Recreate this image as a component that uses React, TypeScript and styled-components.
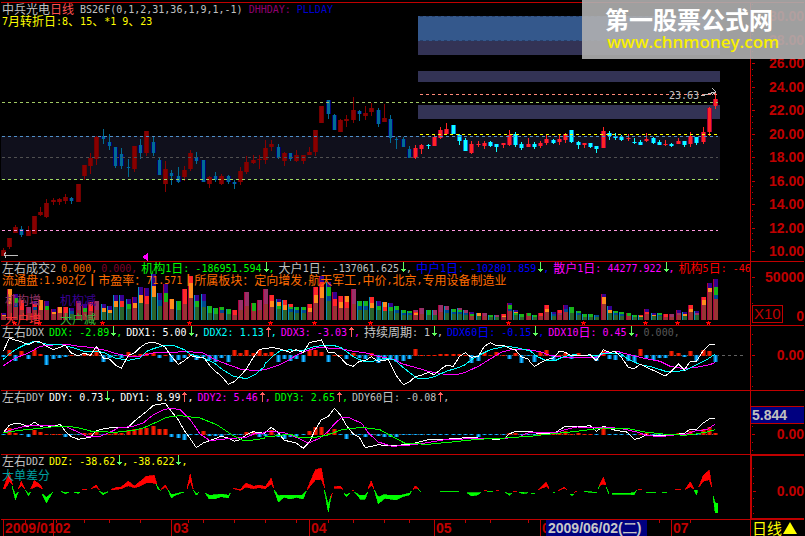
import React from 'react';
import styled, { createGlobalStyle } from 'styled-components';

const RED = '#c00000';

const GlobalStyle = createGlobalStyle`
  body {
    margin: 0;
    background: #000;
    color: #c0c0c0;
    font-family: 'DejaVu Sans Mono', 'Noto Sans CJK SC', monospace;
    font-size: 10px;
    line-height: 12px;
  }
`;

const Screen = styled.main`
  position: relative;
  padding: 2px 1px 0;
  overflow-x: clip;
  background: #000;
`;

const Panel = styled.section`
  display: grid;
  grid-template-columns: minmax(0, 1fr) 54px;
  border-top: 1px solid ${RED};
`;

const Plot = styled.div`
  position: relative;
  overflow-x: clip;
`;

const Chart = styled.svg`
  display: block;
  width: 100%;
  height: auto;
`;

const Overlay = styled.header`
  position: absolute;
  inset: 0 0 auto 0;
`;

const Line = styled.div<{ $color?: string }>`
  display: flex;
  height: 12px;
  padding-left: 1px;
  white-space: pre;
  color: ${(p) => p.$color ?? '#c0c0c0'};
`;

const Tint = styled.span<{ $color: string }>`
  display: inline-flex;
  flex: none;
  color: ${(p) => p.$color};
`;

const Name = styled(Tint)`
  margin-right: 5px;
`;

const Latin = styled.span`
  font: 10px/13px 'DejaVu Sans Mono', monospace;
`;

const Han = styled.span`
  font: 12px/12px 'Noto Sans CJK SC', sans-serif;
`;

const Comma = styled.span`
  width: 10px;
  line-height: 13px;
`;

const Legend = styled.div<{ $top: number; $left?: number }>`
  position: absolute;
  left: ${(p) => p.$left ?? 4}px;
  top: ${(p) => p.$top}px;
  display: flex;
  gap: 19px;
`;

const Axis = styled.div<{ $active?: boolean }>`
  position: relative;
  display: flex;
  flex-direction: column;
  align-items: flex-end;
  border-left: ${(p) => (p.$active ? 2 : 1)}px solid ${RED};
  box-shadow: ${(p) => (p.$active ? `inset 0 1px ${RED}, inset 0 -1px ${RED}` : 'none')};
  color: ${RED};
  font: bold 14px/14px 'Liberation Sans', sans-serif;
`;

const PriceScale = styled.div`
  display: flex;
  flex-direction: column;
  justify-content: space-between;
  height: 249px;
  padding-top: 6px;
`;

const Level = styled.span<{ $top: number }>`
  margin-top: ${(p) => p.$top}px;
`;

const VolumeFoot = styled.div`
  display: flex;
  align-items: flex-end;
  justify-content: space-between;
  align-self: stretch;
  margin-top: 21px;
`;

const Multiplier = styled.span`
  margin-left: 1px;
  padding: 0 1px;
  border: 1px solid ${RED};
  font: 15px/16px 'Liberation Sans', sans-serif;
`;

const CursorValue = styled.output`
  align-self: stretch;
  margin-top: 15px;
  padding-left: 1px;
  border: solid ${RED};
  border-width: 1px 0;
  background: #000080;
  color: #c0c0c0;
  line-height: 16px;
`;

const Ticks = styled.svg`
  position: absolute;
  left: 0;
  top: 0;
  width: 6px;
  height: 100%;
`;

const Months = styled.div`
  position: relative;
  display: grid;
  grid-template-columns: 2fr 50fr 118fr 138fr 125fr 106fr 131fr 79fr;
  height: 16px;
  color: ${RED};
  font: bold 14px/16px 'Liberation Sans', sans-serif;
`;

const Month = styled.div`
  position: relative;
  min-width: 0;
  padding-left: 1px;
  border-left: 1px solid ${RED};
  white-space: nowrap;
`;

const MonthTicks = styled(Chart)`
  position: absolute;
  left: 0;
  top: 0;
`;

const SelectedDate = styled.time`
  position: absolute;
  left: 5px;
  top: 0;
  padding: 0 6px 0 2px;
  background: #000080;
  color: #c8c8c8;
`;

const PeriodButton = styled.button`
  display: flex;
  align-items: center;
  gap: 1px;
  height: 16px;
  padding: 0 1px;
  border: 0;
  border-left: 1px solid ${RED};
  background: none;
  color: #ff0;
  font: 15px/16px 'Noto Sans CJK SC', sans-serif;
  white-space: nowrap;
`;

const Watermark = styled.a`
  position: absolute;
  right: 0;
  top: 0;
  width: 200px;
  height: 53px;
  padding: 6px 0 0 23px;
  background: rgba(176, 176, 176, 0.9);
  color: #fff;
  text-decoration: none;
  font: bold 24px/26px 'Noto Sans CJK SC', sans-serif;
`;

const Address = styled.div`
  padding-left: 2px;
  color: #f8f000;
  font: 600 17px/20px 'Open Sans', sans-serif;
`;

/* ---------- text ---------- */

function Mixed({ children }: { children: string }) {
  const runs = children.match(/[\u2500-\u257f\u3000-\u9fff\uff00-\uffef]+|[^\u2500-\u257f\u3000-\u9fff\uff00-\uffef]+/g) ?? [];
  return (
    <>
      {runs.map((run, i) => (run.charCodeAt(0) > 0x24ff ? <Han key={i}>{run}</Han> : <Latin key={i}>{run}</Latin>))}
    </>
  );
}

function Arrow({ up }: { up: boolean }) {
  return (
    <svg width="7" height="12" viewBox="0 0 7 12" shapeRendering="crispEdges" fill={up ? '#ff6060' : '#60ff60'}>
      <rect x="4" y={up ? 1 : 0} width="1" height="10" />
      {up ? <path d="M3 2h3v1h-3zM2 3h5v1h-5z" /> : <path d="M3 8h3v1h-3zM2 7h5v1h-5z" />}
    </svg>
  );
}

type FieldData = [text: string, color: string, trend?: 'up' | 'down'];

function Fields({ name, items }: { name: string; items: FieldData[] }) {
  return (
    <Line>
      <Name $color="#c0c0c0">
        <Mixed>{name}</Mixed>
      </Name>
      {items.map(([text, color, trend]) => (
        <Tint key={text + color} $color={color}>
          <Mixed>{text}</Mixed>
          {trend && <Arrow up={trend === 'up'} />}
          <Comma>,</Comma>
        </Tint>
      ))}
    </Line>
  );
}

/* ---------- data ---------- */

const dayX = (i: number) => 3 + 25 * Math.floor(i / 4) + 6 * (i % 4);

// direction, high, body top, body bottom, low
const CANDLES = `u248 250 256 256,u238 238 247 249,u225 227 233 233,d226 229 235 237,u226 230 236 236,u216 216 234 234,
u207 212 215 216,u199 203 217 218,u198 200 202 205,u198 199 202 205,u194 197 201 204,d197 198 201 204,u184 184 202 202,
u165 165 176 180,u153 158 166 174,u136 137 159 165,d129 136 139 144,d134 142 146 150,d147 147 166 168,d148 154 166 169,
d159 167 168 177,u146 146 169 172,d139 145 153 159,u131 131 153 156,d136 142 153 156,d158 160 175 175,u161 169 184 192,
d170 173 176 185,d167 176 182 183,u166 170 177 181,u150 153 169 171,d152 157 161 164,d160 160 182 182,u176 177 184 188,
d172 176 180 182,u174 176 184 185,d175 176 182 184,d180 182 184 189,u167 171 182 185,u156 162 172 174,u155 160 163 164,
u155 159 160 169,u140 148 160 164,u140 144 147 151,d144 147 158 159,u152 153 161 166,d153 153 159 161,u150 155 161 162,
u155 155 161 164,u147 152 155 155,u130 130 152 156,u106 106 123 123,d100 100 114 119,d114 115 130 130,u119 120 132 132,
u115 119 121 127,u97 110 120 123,d110 111 114 121,u106 113 116 120,u103 108 112 116,d108 110 124 127,u104 118 122 122,
d115 119 138 143,d137 139 140 149,d137 139 147 147,d146 149 158 158,u145 148 158 159,u144 145 149 154,d144 145 146 149,
u135 137 146 146,u127 130 138 139,u123 129 134 134,d125 125 134 134,d134 135 141 145,d138 140 151 151,u141 144 153 154,
u141 144 145 147,u141 143 146 149,d141 142 146 147,d144 144 147 152,u143 143 145 148,u130 135 145 146,d132 134 145 147,
d142 144 148 150,u138 144 147 147,d142 144 147 149,u141 143 146 148,u134 139 143 145,d139 140 143 144,u134 139 142 145,
u133 134 140 143,d130 130 142 143,d141 142 145 149,u143 143 145 148,d143 143 147 148,d146 146 149 153,u127 131 148 148,
d131 133 136 140,d133 136 138 140,d135 137 140 141,u134 138 139 141,d138 142 143 144,d140 142 145 145,u133 139 141 142,
d137 138 143 144,d140 142 145 145,u140 144 145 146,d143 144 146 147,u138 141 144 144,d141 141 145 147,u132 136 144 147,
d137 137 143 145,u127 132 142 144,u107 108 132 136,u91 99 106 109`
  .split(',')
  .map((s) => {
    const t = s.trim();
    const [high, top, bottom, low] = t.slice(1).split(' ').map(Number);
    return { up: t[0] === 'u', high, top, bottom, low };
  });

// height and stacked colours from the top of the bar to its base
const VOLUMES = `7po 31oB 26pgb 20rB 13mB 19prb 20oB 19pg 11po 13oB 13rB 12pb 19mB 16pg 18rB 19mB 16po 14po 25po 25pr 21pg 23po
33po 32pr 46po 27pb 36pg 21oB 19gG 31rB 44roo 25pg 26pb 14gG 12gG 13gb 11gG 10rB 20mB 28mB 17gB 20mB 31mB 25roB 21pog 20roG 16rgb
13gbG 13gbG 16roB 33roB 44prooB 38pggb 28prB 24roB 24orB 31mmB 19gbG 19gbG 23roG 19pgG 18orG 17pgG 14gbG 10gbG 9gbG 10mro 12mmB
10gG 10mG 15mB 14mbG 11gbG 12mgb 10mbG 8pgB 7oG 7mB 5gG 5mG 6roB 17pggb 10pog 6gG 7gB 5gG 7rB 15roB 8pbG 10rmB 15pbB 13ggG
9gbG 6gG 6gG 5bG 26pooBB 14poG 9gbG 8gbG 7gB 5gG 5ro 11prB 7poG 7gbG 6rB 6mB 10pmB 8poG 15roB 9pmG 23rooBB 37poBBB 41ppggb`
  .split(/\s+/)
  .map((s) => ({ height: parseInt(s, 10), bands: s.replace(/\d+/, '').split('') }));

const BAND_COLORS: Record<string, string> = {
  p: '#360090',
  o: '#ff8c1c',
  g: '#18b418',
  r: '#ff2828',
  m: '#983068',
  b: '#004890',
  B: '#983434',
  G: '#2c642c',
};

const DDX_BARS = [
  -5, 19, -17, 16, -11, 19, 7, -29, -11, -8, -5, 3, -2, 10, 7, 17, -20, -10, -4, -8, 13, 1, 7, 10, 8, -8, 2, -20, -14, -8,
  7, -14, -5, -14, -20, -8, -20, 19, 10, 19, 10, 17, 10, 13, -20, -11, -17, -11, -20, 19, 19, 13, -20, 4, 4, -11, 10, -8,
  -11, 10, -23, -14, -14, -20, -17, -11, 22, 4, 4, 4, 7, 7, 7, 7, 4, -23, -17, 13, 1, 13, 4, -11, 8, -23, -3, -20, 13, 19,
  -14, 4, 10, -11, 10, 4, -2, -17, 16, -11, -14, -5, -17, -20, 22, -8, -14, -8, -8, 16, 10, -5, 16, -17, 19, 16, -20,
];

const DDY_BARS = [
  -2, 22, 7, -2, -8, 15, 9, 3, 3, 3, -8, -3, -4, 6, 5, 13, -2, 4, 6, 7, 14, 17, 19, 20, 28, 17, 19, -8, -11, -17, -3, -2,
  13, -6, -7, -5, -4, -2, -4, 10, 10, -8, -6, 16, -10, -14, -10, -7, -3, 13, 25, 25, 7, 19, -4, -16, -3, -3, -10, -4, -7,
  -8, -8, -8, -3, -3, -3, -3, -3, -3, -3, -3, -3, -3, -3, -4, -8, -2, -2, -2, -2, 6, 6, -2, -2, -4, 7, 4, 4, 6, 13, 3, 6,
  4, 4, -4, 22, -4, -4, -3, -4, -4, 2, 7, -4, -4, -4, -4, 6, 4, 13, -4, 18, 24, 6,
];

/* Traces are recorded at three steps per pixel, in sections with their own origin. */
const place = (ox: number, oy: number, pts: string) =>
  pts
    .split(' ')
    .map((p) => {
      const [x, y] = p.split(',').map(Number);
      return `${(ox + x / 3).toFixed(1)},${(oy + y / 3).toFixed(1)}`;
    })
    .join(' ');

const trace = (oy: number, a: string, b: string, c: string) =>
  [place(0, oy, a), place(265, oy, b), place(530, oy, c)].join(' ');

const DDX_LINES: [string, string][] = [
  ['#ff00ff', trace(258,
    '10,323 46,300 85,285 121,265 150,262 196,258 235,265 270,268 310,275 346,286 385,295 421,295 460,285 500,283 571,281 610,285 646,305 685,320 721,333 765,338 794,335',
    '0,335 40,322 70,307 94,292 125,278 160,268 190,270 230,273 265,280 301,284 340,295 390,305 410,317 450,328 490,340 540,349 575,350 601,343 640,325 676,303 710,282 740,275 770,273 794,275',
    '0,276 30,281 60,292 100,298 140,298 200,298 230,283 265,281 300,290 340,300 390,310 420,325 463,332 500,328 540,320 556,313')],
  ['#00ffff', trace(258,
    '10,304 28,288 46,275 75,260 103,250 139,258 175,258 214,268 253,280 289,280 310,283 346,300 385,307 421,300 440,280 460,272 496,261 525,264 553,275 571,288 610,300 646,317 664,332 700,355 739,362 765,350 794,325',
    '0,317 25,293 45,279 75,275 94,279 115,277 150,265 200,261 226,268 244,280 265,296 295,310 325,310 340,305 370,300 390,307 410,325 433,343 455,360 480,363 508,356 544,340 583,328 601,320 619,305 645,290 676,275 720,265 751,268 780,275',
    '0,278 20,295 49,308 75,308 100,296 130,290 163,293 200,294 220,286 256,287 274,288 295,304 331,320 370,328 406,340 440,340 463,338 500,320 530,305 556,288')],
  ['#ffffff', trace(258,
    '10,280 28,241 46,246 64,251 85,260 103,251 121,252 139,264 160,275 196,262 214,285 235,294 253,285 271,293 289,265 310,300 328,303 346,321 364,331 385,292 403,285 421,268 439,256 460,253 478,258 496,268 514,295 535,319 553,308 571,293 589,297 610,297 628,321 646,340 664,354 685,379 703,371 721,354 739,333 760,298 778,275 794,271',
    '0,273 20,268 45,273 75,283 94,275 115,284 133,254 169,246 190,283 208,284 226,298 244,318 265,325 283,310 301,308 319,296 340,310 370,305 394,353 415,380 433,372 451,356 469,352 490,343 508,350 526,335 544,322 565,325 583,296 601,284 619,298 640,295 658,265 676,254 694,263 715,262 733,271 751,275 769,296 790,303',
    '0,312 13,325 49,305 70,300 88,280 106,283 124,294 163,293 181,290 199,308 220,275 238,283 256,281 274,298 295,328 313,332 331,318 349,328 370,337 388,345 406,354 424,340 445,318 463,336 481,310 499,310 520,278 538,260 556,260')],
];

const DDY_LINES: [string, string][] = [
  ['#ffffff', trace(388,
    '10,134 28,112 46,106 64,108 85,116 103,102 121,115 139,113 160,116 180,109 196,130 214,146 235,154 253,151 271,148 289,128 310,123 340,118 385,118 403,100 421,85 439,71 460,52 496,46 514,70 535,95 553,128 571,152 589,179 610,165 628,158 664,145 685,150 703,160 721,155 739,140 760,131 792,136',
    '0,134 19,118 40,134 58,157 94,165 115,181 133,163 151,125 169,95 190,85 208,61 226,80 244,112 265,138 283,148 301,179 340,170 375,174 433,169 460,163 490,155 540,154 620,148 660,152 700,154 720,150 733,138 751,130 790,130',
    '0,130 30,138 75,134 106,115 145,117 181,113 199,130 220,115 256,127 290,132 313,154 331,150 349,141 420,142 463,136 481,123 499,126 520,105 538,93 556,90')],
  ['#ff00ff', trace(388,
    '10,134 46,122 85,112 130,113 196,115 225,128 260,145 300,145 330,133 355,120 400,115 430,105 460,80 490,65 514,61 540,65 571,95 600,138 630,158 685,152 740,148 765,136 790,136',
    '0,132 30,131 60,135 94,148 130,166 165,150 190,130 208,108 230,88 250,88 290,106 310,135 340,162 380,175 430,172 480,165 540,155 620,152 700,152 760,148 780,138 792,134',
    '0,134 75,135 106,125 140,117 200,118 220,118 270,121 320,132 349,142 390,146 440,140 463,140 499,128 530,125 556,108')],
  ['#00ff00', trace(388,
    '10,134 60,127 121,121 180,114 230,118 275,130 346,133 400,127 430,120 470,102 500,88 540,83 600,90 650,110 700,143 730,158 770,155 794,150',
    '0,147 40,143 75,138 100,148 150,148 185,142 230,125 290,118 345,125 390,150 420,166 490,169 560,162 640,154 720,150 792,145',
    '0,145 60,138 140,130 220,120 300,123 345,132 400,138 463,142 499,138 530,132 556,125')],
];

const DDZ_SHAPES: [number, string, string][] = [
  [0, 'r', '10,302 28,252 37,290 28,280 16,302'],
  [0, 'g', '36,295 46,335 55,312 46,320'],
  [0, 'r', '55,303 64,280 75,303 64,293'],
  [0, 'g', '76,305 85,323 92,312 85,318'],
  [0, 'r', '92,302 103,278 121,290 127,303 112,294 98,300'],
  [0, 'g', '127,318 139,345 158,313 139,328'],
  [0, 'g', '184,311 196,314 208,312 196,317'],
  [0, 'g', '222,313 235,316 241,312'],
  [0, 'r', '246,306 262,303 260,305'],
  [0, 'r', '272,303 289,290 298,306 289,297'],
  [0, 'g', '298,310 310,320 325,311 310,316'],
  [0, 'r', '333,305 350,297 364,297 385,279 403,294 421,280 439,265 463,262 470,288 460,285 439,284 421,294 403,299 385,293 364,302 340,305'],
  [0, 'g', '468,288 481,308 474,302'],
  [0, 'r', '484,304 496,290 504,306 496,297'],
  [0, 'g', '504,305 514,320 553,312 530,320 514,329'],
  [0, 'r', '561,302 571,258 580,304 571,280'],
  [0, 'g', '580,306 589,322 598,312 589,317'],
  [0, 'g', '616,315 628,322 650,320 664,318 685,322 692,314 685,330 664,326 646,332 628,333'],
  [0, 'r', '700,302 721,304 739,285 760,295 778,291 796,296 814,270 821,300 814,288 796,302 778,299 760,302 739,297 721,307'],
  [265, 'g', '27,305 40,323 60,321 94,321 112,321 124,308 115,333 94,328 75,333 58,328 40,342'],
  [265, 'r', '126,306 133,288 151,246 169,240 179,300 169,274 151,276 133,298'],
  [265, 'g', '178,305 190,350 199,320 190,372'],
  [265, 'r', '197,330 202,315 199,328'],
  [265, 'r', '207,297 226,294 234,304 226,301 207,300'],
  [265, 'g', '236,315 244,320 255,316 244,326'],
  [265, 'r', '260,306 268,307'],
  [265, 'g', '269,313 283,321 301,321 308,312 301,333 286,333'],
  [265, 'r', '308,304 319,278 327,302 319,292'],
  [265, 'g', '328,306 340,327 358,320 376,322 394,321 412,321 433,316 440,308 433,321 412,326 394,336 360,331 340,347'],
  [265, 'r', '444,304 451,293 460,302 451,300'],
  [265, 'g', '458,303 467,310'],
  [265, 'g', '525,310 582,310'],
  [265, 'g', '605,314 648,314 636,321 620,324'],
  [265, 'r', '656,306 666,307'],
  [265, 'g', '666,310 684,311'],
  [265, 'r', '694,307 702,308'],
  [265, 'g', '720,312 733,322 742,315 733,318'],
  [265, 'r', '745,310 757,310'],
  [265, 'g', '762,313 775,317 790,314'],
  [265, 'g', '797,316 809,316'],
  [530, 'r', '24,306 49,282 57,302 49,295'],
  [530, 'g', '70,313 75,314'],
  [530, 'r', '84,308 103,297 112,306 103,301'],
  [530, 'g', '120,318 131,318 125,323'],
  [530, 'r', '131,314 141,310'],
  [530, 'g', '162,310 181,311 200,314 181,313'],
  [530, 'g', '204,302 212,288 206,300'],
  [530, 'r', '208,294 220,268 229,292 220,288'],
  [530, 'g', '229,298 237,317 232,306'],
  [530, 'g', '246,316 295,316 313,314 320,306 313,320 290,319 246,318'],
  [530, 'r', '325,304 336,304'],
  [530, 'g', '348,313 378,313'],
  [530, 'g', '396,313 411,313'],
  [530, 'r', '435,304 453,304'],
  [530, 'r', '465,304 481,282 492,304 481,296'],
  [530, 'g', '493,306 499,320 503,308'],
  [530, 'r', '506,298 520,262 538,246 545,298 538,275 520,280'],
  [530, 'g', '549,325 556,345 563,346 563,374 556,374'],
];

const SIGNAL_X = [14, 39, 102, 189, 270, 314, 370, 508, 583, 645, 677, 708];

/* ---------- drawings ---------- */

function Candle({ i }: { i: number }) {
  const { up, high, top, bottom, low } = CANDLES[i];
  const bright = i >= 66;
  const edge = up ? (bright ? '#a00040' : '#700000') : bright ? '#0070d8' : '#000070';
  const core = up ? (bright ? '#ff2424' : '#880000') : bright ? '#10ffff' : '#006c94';
  const x = dayX(i);
  return (
    <g>
      <rect x={x - 2} y={top} width={5} height={bottom - top} fill={edge} />
      <rect x={x - 1} y={top} width={3} height={bottom - top} fill={core} />
      <rect x={x} y={high} width={1} height={Math.max(1, low - high)} fill={core} />
    </g>
  );
}

function Dashes({ y, color, from = 2, to = 718 }: { y: number; color: string; from?: number; to?: number }) {
  return <path d={`M${from} ${y + 0.5}H${to}`} stroke={color} strokeDasharray="3 3" />;
}

function PriceChart() {
  return (
    <Chart viewBox="1 3 749 258" shapeRendering="crispEdges" role="img" aria-label="K线">
      <rect x="1" y="136" width="719" height="44" fill="#10101c" />
      <rect x="418" y="16" width="302" height="25" fill="#34588c" />
      <rect x="418" y="41" width="302" height="14" fill="#333355" />
      <rect x="418" y="71" width="302" height="11" fill="#333355" />
      <rect x="418" y="105" width="302" height="14" fill="#333355" />
      <Dashes y={16} color="#26406c" from={420} />
      <Dashes y={40} color="#26406c" from={420} />
      {CANDLES.map((_, i) => (
        <Candle key={i} i={i} />
      ))}
      <Dashes y={94} color="#ff8878" from={420} />
      <Dashes y={102} color="#a0c864" />
      <Dashes y={134} color="#ffff00" from={420} />
      <Dashes y={136} color="#5090c8" />
      <Dashes y={157} color="#505050" />
      <Dashes y={179} color="#a0d864" />
      <Dashes y={230} color="#ff98e0" />
      <text x="669" y="99" fill="#c0c0c0" fontFamily="DejaVu Sans Mono, monospace" fontSize="10">
        23.63
      </text>
      <path d="M701 96L715 92M712 88L716 92L712 95" fill="none" stroke="#c0c0c0" />
      <path d="M6 255.5H18M5 252V254M4 253L6 258" fill="none" stroke="#c0c0c0" />
      <path d="M142 257L148 253V261Z" fill="#ff00ff" />
    </Chart>
  );
}

function VolumeChart() {
  return (
    <Chart viewBox="1 262 749 63" shapeRendering="crispEdges" role="img" aria-label="成交量">
      {VOLUMES.slice(0, 115).map(({ height, bands }, i) => {
        const x = dayX(i);
        const last = bands[bands.length - 1];
        const all = last === 'B' || last === 'G' ? bands : [...bands, CANDLES[i].up ? 'B' : 'G'];
        const baseHeight = Math.round(height * 0.5);
        const each = (height - baseHeight) / Math.max(1, all.length - 1);
        const base = all[all.length - 1];
        return (
          <g key={i}>
            <rect x={x - 2} y={320 - height} width={1} height={height} fill={base === 'B' ? '#b00040' : '#0890c0'} />
            <rect x={x - 1} y={320 - baseHeight} width={4} height={baseHeight} fill={BAND_COLORS[base]} />
            {all.slice(0, -1).map((band, k) => {
              const y0 = Math.round(320 - height + k * each);
              const y1 = Math.round(320 - height + (k + 1) * each);
              return <rect key={k} x={x - 1} y={y0} width={4} height={y1 - y0} fill={BAND_COLORS[band]} />;
            })}
          </g>
        );
      })}
      {SIGNAL_X.map((x) => (
        <path key={x} d={`M${x} 321h1v1h2v1h-1v2h-1v-1h-1v1h-1v-2h-1v-1h2z`} fill="#ff0000" />
      ))}
    </Chart>
  );
}

function FlowChart({ zero, top, height, bars, lines, label }: {
  zero: number; top: number; height: number; bars: number[]; lines: [string, string][]; label: string;
}) {
  return (
    <Chart viewBox={`1 ${top} 749 ${height}`} shapeRendering="crispEdges" role="img" aria-label={label}>
      <path d={`M2 ${zero + 0.5}H${label === 'DDX' ? 744 : 718}`} stroke="#606060" strokeDasharray="3 3" />
      {bars.map((v, i) => {
        const h = Math.max(1, Math.round(Math.abs(v) / 3));
        const y = v > 0 ? zero + 1 - h : zero;
        const x = dayX(i);
        return (
          <g key={i}>
            <rect x={x - 2} y={y} width={5} height={h} fill={v > 0 ? '#801000' : '#004c78'} />
            <rect x={x - 1} y={y} width={3} height={h} fill={v > 0 ? '#e01800' : '#0094e0'} />
            <rect x={x} y={y} width={1} height={h} fill={v > 0 ? '#ff2000' : '#30b8ff'} />
          </g>
        );
      })}
      {lines.map(([color, points]) => (
        <polyline key={color} points={points} fill="none" stroke={color} />
      ))}
    </Chart>
  );
}

function SpreadChart() {
  return (
    <Chart viewBox="1 455 749 64" shapeRendering="crispEdges" role="img" aria-label="DDZ">
      {DDZ_SHAPES.map(([ox, kind, pts]) => {
        const color = kind === 'r' ? '#ff0000' : '#00ff00';
        return <polygon key={ox + pts} points={place(ox, 388, pts)} fill={color} stroke={color} strokeWidth="0.7" />;
      })}
    </Chart>
  );
}

function AxisTicks({ major, minor }: { major: number[]; minor: number[] }) {
  return (
    <Ticks shapeRendering="crispEdges" fill={RED}>
      {major.map((y) => (
        <rect key={`M${y}`} x="1" y={y} width="3" height="1" />
      ))}
      {minor.map((y) => (
        <rect key={`m${y}`} x="1" y={y} width="1" height="1" />
      ))}
    </Ticks>
  );
}

const PRICES = ['30.00', '28.00', '26.00', '24.00', '22.00', '20.00', '18.00', '16.00', '14.00', '12.00', '10.00'];
const PRICE_TICKS = PRICES.map((_, i) => Math.round(13 + i * 23.5));
const PRICE_MINOR = PRICE_TICKS.flatMap((y) => [y - 18, y - 12, y - 6]);
const DAY_TICKS = [25, 56, 84, 109, 140, 188, 203, 234, 265, 296, 328, 353, 384, 409, 465, 490, 528, 659, 690];

export default function App() {
  return (
    <>
      <GlobalStyle />
      <Screen>
        <Panel>
          <Plot>
            <PriceChart />
            <Overlay>
              <Line>
                <Mixed>中兵光电</Mixed>
                <Tint $color="#ff5050">
                  <Mixed>日线</Mixed>
                </Tint>
                <Mixed>{' BS26F(0,1,2,31,36,1,9,1,-1) '}</Mixed>
                <Tint $color="#900070">
                  <Mixed>{'DHHDAY: '}</Mixed>
                </Tint>
                <Tint $color="#0000d0">
                  <Mixed>PLLDAY</Mixed>
                </Tint>
              </Line>
              <Line $color="#ffff00">
                <Mixed>7月转折日:8、15、*1 9、23</Mixed>
              </Line>
            </Overlay>
          </Plot>
          <Axis>
            <AxisTicks major={PRICE_TICKS} minor={PRICE_MINOR} />
            <PriceScale>
              {PRICES.map((p) => (
                <span key={p}>{p}</span>
              ))}
            </PriceScale>
          </Axis>
        </Panel>

        <Panel>
          <Plot>
            <VolumeChart />
            <Overlay>
              <Fields
                name="左右成交2"
                items={[
                  ['0.000', '#ff6c00'],
                  ['0.000', '#800028'],
                  ['机构1日: -186951.594', '#00ff00', 'down'],
                  ['大户1日: -137061.625', '#c0c0c0', 'down'],
                  ['中户1日: -102801.859', '#0000ff', 'down'],
                  ['散户1日: 44277.922', '#ff00ff', 'down'],
                  ['机构5日: -466', '#ff0000'],
                ]}
              />
              <Line $color="#ff6c00">
                <Mixed>流通盘:1.902亿┃市盈率：71.571┃所属板块：定向增发,航天军工,中价,北京,专用设备制造业</Mixed>
              </Line>
            </Overlay>
            <Legend $top={32}>
              <Tint $color="#903468">
                <Mixed>机构增</Mixed>
              </Tint>
              <Tint $color="#3c0098">
                <Mixed>机构减</Mixed>
              </Tint>
            </Legend>
            <Legend $top={51}>
              <Tint $color="#ff3030">
                <Mixed>大户增</Mixed>
              </Tint>
              <Tint $color="#38b838">
                <Mixed>大户减</Mixed>
              </Tint>
            </Legend>
          </Plot>
          <Axis>
            <AxisTicks major={[15]} minor={[24, 32, 41]} />
            <Level $top={8}>50000</Level>
            <VolumeFoot>
              <Multiplier>X10</Multiplier>
              <span>0</span>
            </VolumeFoot>
          </Axis>
        </Panel>

        <Panel>
          <Plot>
            <FlowChart label="DDX" zero={355} top={326} height={64} bars={DDX_BARS} lines={DDX_LINES} />
            <Overlay>
              <Fields
                name="左右DDX"
                items={[
                  ['DDX: -2.89', '#00ff00', 'down'],
                  ['DDX1: 5.00', '#ffffff', 'down'],
                  ['DDX2: 1.13', '#00ffff', 'up'],
                  ['DDX3: -3.03', '#ff00ff', 'up'],
                  ['持续周期: 1', '#c8c8c8', 'down'],
                  ['DDX60日: -0.15', '#0000ff', 'down'],
                  ['DDX10日: 0.45', '#ff00ff', 'down'],
                  ['0.000', '#585858'],
                ]}
              />
            </Overlay>
          </Plot>
          <Axis>
            <AxisTicks major={[29]} minor={[8, 18, 39, 50, 60]} />
            <Level $top={22}>0.00</Level>
          </Axis>
        </Panel>

        <Panel>
          <Plot>
            <FlowChart label="DDY" zero={434} top={391} height={63} bars={DDY_BARS} lines={DDY_LINES} />
            <Overlay>
              <Fields
                name="左右DDY"
                items={[
                  ['DDY: 0.73', '#ffffff', 'down'],
                  ['DDY1: 8.99', '#ffffff', 'up'],
                  ['DDY2: 5.46', '#ff00ff', 'up'],
                  ['DDY3: 2.65', '#00ff00', 'up'],
                  ['DDY60日: -0.08', '#c0c0c0', 'up'],
                ]}
              />
            </Overlay>
          </Plot>
          <Axis>
            <AxisTicks major={[43]} minor={[35, 51, 59]} />
            <CursorValue>5.844</CursorValue>
            <Level $top={3}>0.00</Level>
          </Axis>
        </Panel>

        <Panel>
          <Plot>
            <SpreadChart />
            <Overlay>
              <Fields
                name="左右DDZ"
                items={[
                  ['DDZ: -38.62', '#ffff00', 'down'],
                  ['-38.622', '#ffff00', 'down'],
                ]}
              />
            </Overlay>
            <Legend $top={14} $left={1}>
              <Tint $color="#00a0a0">
                <Mixed>大单差分</Mixed>
              </Tint>
            </Legend>
          </Plot>
          <Axis $active>
            <AxisTicks major={[36]} minor={[13, 21, 28, 43, 51, 58]} />
            <Level $top={29}>0.00</Level>
          </Axis>
        </Panel>

        <Panel as="footer">
          <Months>
            <MonthTicks viewBox="1 520 749 16" shapeRendering="crispEdges" fill={RED} aria-hidden="true">
              {DAY_TICKS.map((x) => (
                <rect key={x} x={x} y="520" width="1" height="3" />
              ))}
            </MonthTicks>
            <span />
            <Month>2009/01</Month>
            <Month>02</Month>
            <Month>03</Month>
            <Month>04</Month>
            <Month>05</Month>
            <Month>
              0
              <SelectedDate>2009/06/02(二)</SelectedDate>
            </Month>
            <Month>07</Month>
          </Months>
          <PeriodButton type="button">
            日线
            <svg width="14" height="14" viewBox="0 0 14 14" fill="#ffff00" aria-hidden="true">
              <path d="M7 1L14 13H0Z" />
            </svg>
          </PeriodButton>
        </Panel>

        <Watermark href="#">
          第一股票公式网
          <Address>www.chnmoney.com</Address>
        </Watermark>
      </Screen>
    </>
  );
}
